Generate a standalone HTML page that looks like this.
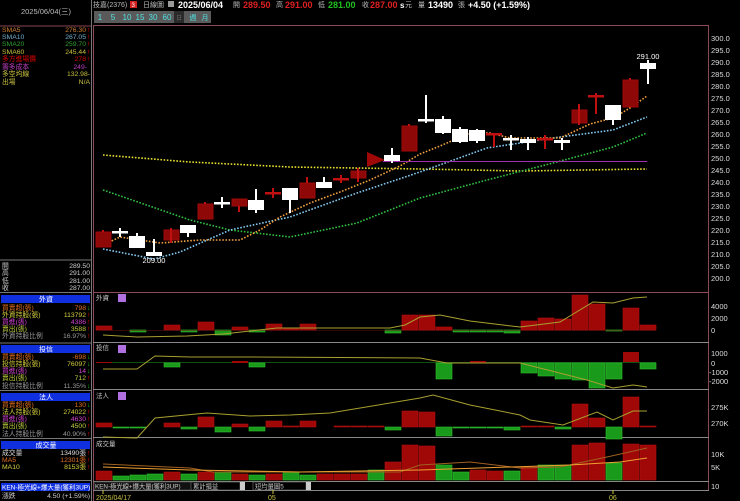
<!DOCTYPE html>
<html><head><meta charset="utf-8"><style>
html,body{margin:0;padding:0;background:#000;width:740px;height:501px;overflow:hidden}
svg{display:block}
text{font-family:"Liberation Sans","Noto Sans CJK TC",sans-serif}
</style></head><body>
<svg width="740" height="501" viewBox="0 0 740 501" xmlns="http://www.w3.org/2000/svg">
<rect width="740" height="501" fill="#000"/>
<line x1="91.5" y1="0" x2="91.5" y2="501" stroke="#777" stroke-width="1"/>
<text x="46" y="14" fill="#bbb" font-size="7.5" text-anchor="middle">2025/06/04(三)</text>
<line x1="0" y1="26" x2="91" y2="26" stroke="#884455"/>
<g font-size="6.8">
<text x="2" y="32" fill="#d08030">SMA5</text><text x="86" y="32" fill="#d08030" text-anchor="end">276.30</text><text x="87" y="32" fill="#e00">↑</text>
<text x="2" y="39" fill="#70b0d0">SMA10</text><text x="86" y="39" fill="#70b0d0" text-anchor="end">267.05</text><text x="87" y="39" fill="#e00">↑</text>
<text x="2" y="46" fill="#30a030">SMA20</text><text x="86" y="46" fill="#30a030" text-anchor="end">259.70</text><text x="87" y="46" fill="#e00">↑</text>
<text x="2" y="54" fill="#c8c040">SMA60</text><text x="86" y="54" fill="#c8c040" text-anchor="end">245.44</text><text x="87" y="54" fill="#e00">↑</text>
<text x="2" y="61" fill="#d00">多方進場價</text><text x="86" y="61" fill="#d00" text-anchor="end">278</text><text x="87" y="61" fill="#e00">↑</text>
<text x="2" y="69" fill="#c040c0">籌多成本</text><text x="87" y="69" fill="#c040c0" text-anchor="end">249-</text>
<text x="2" y="76" fill="#c8c040">多空均線</text><text x="90" y="76" fill="#c8c040" text-anchor="end">132.98-</text>
<text x="2" y="84" fill="#c8c040">出場</text><text x="90" y="84" fill="#c8c040" text-anchor="end">N/A</text>
</g>
<line x1="0" y1="260" x2="91" y2="260" stroke="#777"/>
<g font-size="6.8" fill="#ccc">
<text x="2" y="268">開</text><text x="90" y="268" text-anchor="end">289.50</text>
<text x="2" y="275">高</text><text x="90" y="275" text-anchor="end">291.00</text>
<text x="2" y="283">低</text><text x="90" y="283" text-anchor="end">281.00</text>
<text x="2" y="290">收</text><text x="90" y="290" text-anchor="end">287.00</text>
</g>
<line x1="0" y1="292.5" x2="91" y2="292.5" stroke="#777"/>
<rect x="1" y="295" width="89" height="8" fill="#1030e0"/><text x="46" y="301.5" fill="#fff" font-size="7" text-anchor="middle">外資</text>
<g font-size="6.8">
<text x="2" y="310" fill="#e07020">買賣超(張)</text><text x="86" y="310" fill="#e07020" text-anchor="end">798</text><text x="87" y="310" fill="#0c0">↓</text>
<text x="2" y="317" fill="#d8d040">外資持股(張)</text><text x="86" y="317" fill="#d8d040" text-anchor="end">113792</text><text x="87" y="317" fill="#e00">↑</text>
<text x="2" y="324" fill="#d040d0">買進(張)</text><text x="86" y="324" fill="#d040d0" text-anchor="end">4386</text><text x="87" y="324" fill="#e00">↑</text>
<text x="2" y="331" fill="#c0d040">賣出(張)</text><text x="86" y="331" fill="#c0d040" text-anchor="end">3588</text><text x="87" y="331" fill="#e00">↑</text>
<text x="2" y="338" fill="#999">外資持股比例</text><text x="86" y="338" fill="#999" text-anchor="end">16.97%</text><text x="87" y="338" fill="#e00">↑</text>
</g>
<line x1="0" y1="343" x2="91" y2="343" stroke="#777"/>
<rect x="1" y="345" width="89" height="8" fill="#1030e0"/><text x="46" y="351.5" fill="#fff" font-size="7" text-anchor="middle">投信</text>
<g font-size="6.8">
<text x="2" y="359" fill="#e07020">買賣超(張)</text><text x="86" y="359" fill="#e07020" text-anchor="end">-698</text><text x="87" y="359" fill="#0c0">↓</text>
<text x="2" y="366" fill="#d8d040">投信持股(張)</text><text x="86" y="366" fill="#d8d040" text-anchor="end">76097</text><text x="87" y="366" fill="#0c0">↓</text>
<text x="2" y="373" fill="#d040d0">買進(張)</text><text x="86" y="373" fill="#d040d0" text-anchor="end">14</text><text x="87" y="373" fill="#0c0">↓</text>
<text x="2" y="380" fill="#c0d040">賣出(張)</text><text x="86" y="380" fill="#c0d040" text-anchor="end">712</text><text x="87" y="380" fill="#e00">↑</text>
<text x="2" y="388" fill="#999">投信持股比例</text><text x="86" y="388" fill="#999" text-anchor="end">11.35%</text><text x="87" y="388" fill="#0c0">↓</text>
</g>
<line x1="0" y1="390.5" x2="91" y2="390.5" stroke="#777"/>
<rect x="1" y="393" width="89" height="8" fill="#1030e0"/><text x="46" y="399.5" fill="#fff" font-size="7" text-anchor="middle">法人</text>
<g font-size="6.8">
<text x="2" y="407" fill="#e07020">買賣超(張)</text><text x="86" y="407" fill="#e07020" text-anchor="end">130</text><text x="87" y="407" fill="#0c0">↓</text>
<text x="2" y="414" fill="#d8d040">法人持股(張)</text><text x="86" y="414" fill="#d8d040" text-anchor="end">274022</text><text x="87" y="414" fill="#e00">↑</text>
<text x="2" y="421" fill="#d040d0">買進(張)</text><text x="86" y="421" fill="#d040d0" text-anchor="end">4630</text><text x="87" y="421" fill="#e00">↑</text>
<text x="2" y="428" fill="#c0d040">賣出(張)</text><text x="86" y="428" fill="#c0d040" text-anchor="end">4500</text><text x="87" y="428" fill="#e00">↑</text>
<text x="2" y="436" fill="#999">法人持股比例</text><text x="86" y="436" fill="#999" text-anchor="end">40.90%</text><text x="87" y="436" fill="#e00">↑</text>
</g>
<line x1="0" y1="438.5" x2="91" y2="438.5" stroke="#777"/>
<rect x="1" y="441" width="89" height="8" fill="#1030e0"/><text x="46" y="447.5" fill="#fff" font-size="7" text-anchor="middle">成交量</text>
<g font-size="6.8">
<text x="2" y="455" fill="#ddd">成交量</text><text x="86" y="455" fill="#ddd" text-anchor="end">13490張</text><text x="87" y="455" fill="#e00">↑</text>
<text x="2" y="462" fill="#e07020">MA5</text><text x="86" y="462" fill="#e07020" text-anchor="end">12301張</text><text x="87" y="462" fill="#e00">↑</text>
<text x="2" y="469" fill="#d8d040">MA10</text><text x="86" y="469" fill="#d8d040" text-anchor="end">8153張</text><text x="87" y="469" fill="#e00">↑</text>
</g>
<line x1="0" y1="480.5" x2="91" y2="480.5" stroke="#777"/>
<rect x="1" y="483" width="89" height="8" fill="#1030e0"/><text x="2" y="489.5" fill="#fff" font-size="6.5">KEN-極光線+爆大量(獲利3UP)</text>
<text x="2" y="498" fill="#ccc" font-size="6.8">漲跌</text><text x="90" y="498" fill="#ccc" font-size="6.8" text-anchor="end">4.50 (+1.59%)</text>

<g font-size="7">
<text x="93" y="7" fill="#bbb">技嘉(2376)</text>
<rect x="130" y="1" width="7" height="7" fill="#d02020"/><text x="131.5" y="7" fill="#fff" font-size="6">3</text>
<text x="143" y="7" fill="#bbb">日線圖</text>
<rect x="168" y="1" width="6" height="6" fill="#999"/>
<text x="178" y="8" fill="#fff" font-size="9" font-weight="bold">2025/06/04</text>
<text x="233" y="7" fill="#bbb">開</text><text x="243" y="8" fill="#e02020" font-size="9" font-weight="bold">289.50</text>
<text x="276" y="7" fill="#bbb">高</text><text x="285" y="8" fill="#e02020" font-size="9" font-weight="bold">291.00</text>
<text x="318" y="7" fill="#bbb">低</text><text x="328" y="8" fill="#20c020" font-size="9" font-weight="bold">281.00</text>
<text x="362" y="7" fill="#bbb">收</text><text x="370" y="8" fill="#e02020" font-size="9" font-weight="bold">287.00</text>
<text x="400" y="8" fill="#fff" font-size="8" font-weight="bold">s</text><text x="405" y="7" fill="#bbb">元</text>
<text x="418" y="7" fill="#bbb">量</text><text x="428" y="8" fill="#fff" font-size="9" font-weight="bold">13490</text>
<text x="458" y="7" fill="#bbb">張</text><text x="468" y="8" fill="#fff" font-size="9" font-weight="bold">+4.50 (+1.59%)</text>
</g>
<g font-size="8">
<rect x="94" y="11" width="117" height="12" fill="#5a5a5a"/>
<rect x="174" y="11" width="10" height="12" fill="#2a2a2a"/>
<text x="100" y="20" fill="#50e0e0" text-anchor="middle">1</text>
<text x="113" y="20" fill="#50e0e0" text-anchor="middle">5</text>
<text x="127" y="20" fill="#50e0e0" text-anchor="middle">10</text>
<text x="140" y="20" fill="#50e0e0" text-anchor="middle">15</text>
<text x="153" y="20" fill="#50e0e0" text-anchor="middle">30</text>
<text x="167" y="20" fill="#50e0e0" text-anchor="middle">60</text>
<text x="179" y="20" fill="#666" font-size="6" text-anchor="middle">日</text>
<text x="193" y="20" fill="#50e0e0" font-size="7" text-anchor="middle">週</text>
<text x="205" y="20" fill="#50e0e0" font-size="7" text-anchor="middle">月</text>
</g>
<line x1="93" y1="25.5" x2="709" y2="25.5" stroke="#8a4a5a"/>
<line x1="93.5" y1="25" x2="93.5" y2="501" stroke="#8a4a5a"/>
<line x1="708.5" y1="25" x2="708.5" y2="490" stroke="#8a4a5a"/>
<line x1="93" y1="292.5" x2="709" y2="292.5" stroke="#8a4a5a"/>
<g stroke="#888">
<line x1="93" y1="342.5" x2="709" y2="342.5"/>
<line x1="93" y1="389.5" x2="709" y2="389.5"/>
<line x1="93" y1="437.5" x2="709" y2="437.5"/>
<line x1="93" y1="481.5" x2="709" y2="481.5"/>
<line x1="93" y1="490.5" x2="709" y2="490.5"/>
</g>
<g font-size="7.5" fill="#ddd">
<text x="711" y="41">300.0</text><text x="711" y="53">295.0</text><text x="711" y="65">290.0</text><text x="711" y="77">285.0</text><text x="711" y="89">280.0</text><text x="711" y="101">275.0</text><text x="711" y="113">270.0</text><text x="711" y="125">265.0</text><text x="711" y="137">260.0</text><text x="711" y="149">255.0</text><text x="711" y="161">250.0</text><text x="711" y="173">245.0</text><text x="711" y="185">240.0</text><text x="711" y="197">235.0</text><text x="711" y="209">230.0</text><text x="711" y="221">225.0</text><text x="711" y="233">220.0</text><text x="711" y="245">215.0</text><text x="711" y="257">210.0</text><text x="711" y="269">205.0</text><text x="711" y="281">200.0</text>
</g>
<g fill="none" stroke-width="1.6" stroke-dasharray="1.6 1.6">
<polyline stroke="#e8e030" points="103,155 190,162 290,167 420,169 520,171 647,169"/>
<polyline stroke="#30c040" points="103,190 190,220 230,230 290,237 357,223 420,198 487,180 553,163 613,147 647,133"/>
<polyline stroke="#80c8f0" points="103,249 154,259 180,252 230,230 290,217 357,193 420,172 487,148 553,138 613,130 647,117"/>
<polyline stroke="#f0a040" points="103,245 120,237 160,243 200,240 240,240 260,230 280,217 310,203 340,192 370,180 400,166 420,154 440,146 470,133 490,133 510,138 560,138 590,124 613,118 630,108 647,96"/>
</g>
<line x1="383" y1="161.5" x2="647" y2="161.5" stroke="#a030b0" stroke-width="1"/>
<g stroke-width="2">
<g fill="#8e0808" stroke="#a00a0a" stroke-width="1">
<rect x="96" y="232" width="15" height="15"/>
<rect x="164" y="230" width="15" height="10"/>
<rect x="198" y="204" width="15" height="15"/>
<rect x="232" y="199" width="15" height="7"/>
<rect x="300" y="183" width="15" height="15"/>
<rect x="351" y="171" width="15" height="7"/>
<rect x="402" y="126" width="15" height="25"/>
<rect x="572" y="110" width="15" height="13"/>
<rect x="623" y="80" width="15" height="27"/>
</g>
<g stroke="#c01010">
<line x1="103" y1="230" x2="103" y2="232"/><line x1="171" y1="228" x2="171" y2="243"/><line x1="205" y1="202" x2="205" y2="204"/><line x1="239" y1="206" x2="239" y2="212"/><line x1="307" y1="177" x2="307" y2="183"/><line x1="358" y1="168" x2="358" y2="182"/><line x1="409" y1="124" x2="409" y2="126"/><line x1="579" y1="104" x2="579" y2="125"/><line x1="630" y1="78" x2="630" y2="80"/>
<line x1="273" y1="188" x2="273" y2="198"/><line x1="494" y1="133" x2="494" y2="147"/><line x1="545" y1="135" x2="545" y2="149"/><line x1="596" y1="93" x2="596" y2="114"/><line x1="341" y1="175" x2="341" y2="183"/>
</g>
<g fill="#c01010">
<rect x="265" y="192" width="16" height="2.5"/><rect x="486" y="133" width="16" height="2.5"/><rect x="537" y="138" width="16" height="2.5"/><rect x="588" y="95" width="16" height="2.5"/><rect x="333" y="178" width="16" height="2.5"/>
</g>
<polygon points="367,152 367,167 385,160" fill="#a00808"/>
<g fill="#fff">
<rect x="129" y="236" width="16" height="12"/><rect x="146" y="252" width="16" height="4"/><rect x="180" y="225" width="16" height="8"/><rect x="248" y="200" width="16" height="10"/><rect x="282" y="188" width="16" height="12"/><rect x="316" y="182" width="16" height="6"/><rect x="384" y="155" width="16" height="6"/><rect x="435" y="119" width="16" height="14"/><rect x="452" y="129" width="16" height="13"/><rect x="469" y="130" width="16" height="11"/><rect x="520" y="139" width="16" height="4"/><rect x="554" y="140" width="16" height="3"/><rect x="605" y="105" width="16" height="15"/><rect x="640" y="63" width="16" height="6"/>
<rect x="112" y="231" width="16" height="2.5"/><rect x="214" y="202" width="16" height="2.5"/><rect x="418" y="119" width="16" height="2.5"/><rect x="503" y="138" width="16" height="2.5"/>
</g>
<g stroke="#fff">
<line x1="120" y1="228" x2="120" y2="237"/><line x1="137" y1="233" x2="137" y2="236"/><line x1="154" y1="239" x2="154" y2="256"/><line x1="188" y1="233" x2="188" y2="237"/><line x1="222" y1="197" x2="222" y2="208"/><line x1="256" y1="189" x2="256" y2="213"/><line x1="290" y1="200" x2="290" y2="213"/><line x1="324" y1="177" x2="324" y2="182"/><line x1="392" y1="148" x2="392" y2="163"/><line x1="426" y1="95" x2="426" y2="123"/><line x1="443" y1="116" x2="443" y2="134"/><line x1="460" y1="127" x2="460" y2="143"/><line x1="477" y1="129" x2="477" y2="143"/><line x1="511" y1="135" x2="511" y2="150"/><line x1="528" y1="137" x2="528" y2="150"/><line x1="562" y1="138" x2="562" y2="150"/><line x1="613" y1="120" x2="613" y2="125"/><line x1="648" y1="60" x2="648" y2="84"/>
</g>
</g>
<text x="648" y="59" fill="#fff" font-size="7.5" text-anchor="middle">291.00</text>
<text x="154" y="263" fill="#fff" font-size="7.5" text-anchor="middle">209.00</text>

<text x="96" y="300" fill="#ccc" font-size="6.5">外資</text><rect x="118" y="294" width="8" height="8" fill="#b070e0"/>
<g font-size="7.5" fill="#ddd"><text x="711" y="309">4000</text><text x="711" y="321">2000</text><text x="711" y="333">0</text></g>
<g fill="#a00808" stroke="#b01010" stroke-width="0.6">
<rect x="96" y="326" width="16" height="4"/><rect x="164" y="325" width="16" height="5"/><rect x="198" y="322" width="16" height="8"/><rect x="232" y="327" width="16" height="3"/><rect x="266" y="324" width="16" height="6"/><rect x="283" y="328" width="16" height="2"/><rect x="300" y="324" width="16" height="6"/><rect x="402" y="315" width="16" height="15"/><rect x="419" y="315" width="16" height="15"/><rect x="436" y="327" width="16" height="3"/><rect x="521" y="321" width="16" height="9"/><rect x="538" y="318" width="16" height="12"/><rect x="555" y="319" width="16" height="11"/><rect x="572" y="295" width="16" height="35"/><rect x="589" y="304" width="16" height="26"/><rect x="623" y="308" width="16" height="22"/><rect x="640" y="325" width="16" height="5"/>
</g>
<g fill="#1a9a1a" stroke="#30c030" stroke-width="0.6">
<rect x="130" y="330" width="16" height="2"/><rect x="181" y="330" width="16" height="2"/><rect x="215" y="330" width="16" height="5"/><rect x="249" y="330" width="16" height="2"/><rect x="385" y="330" width="16" height="3"/><rect x="453" y="330" width="16" height="2"/><rect x="470" y="330" width="16" height="2"/><rect x="487" y="330" width="16" height="2"/><rect x="504" y="330" width="16" height="3"/><rect x="606" y="330" width="16" height="1"/>
</g>
<line x1="96" y1="330.5" x2="656" y2="330.5" stroke="#6a1010" stroke-width="0.6"/>
<polyline fill="none" stroke="#a8a030" stroke-width="1" points="103,335 137,337 187,336 223,334 277,328 323,328 390,328 405,325 420,317 440,315 470,321 503,325 520,327 560,322 593,302 613,303 633,298 647,297"/>

<text x="96" y="350" fill="#ccc" font-size="6.5">投信</text><rect x="118" y="345" width="8" height="8" fill="#b070e0"/>
<g font-size="7.5" fill="#ddd"><text x="711" y="356">1000</text><text x="711" y="366">0</text><text x="709" y="375">-1000</text><text x="709" y="384">-2000</text></g>
<line x1="96" y1="362.5" x2="656" y2="362.5" stroke="#105010" stroke-width="1"/>
<g fill="#a00808"><rect x="96" y="362" width="16" height="1"/><rect x="232" y="361" width="16" height="2"/><rect x="470" y="361" width="16" height="2"/><rect x="623" y="352" width="16" height="10"/></g>
<g fill="#1a9a1a" stroke="#30c030" stroke-width="0.6">
<rect x="164" y="363" width="16" height="4"/><rect x="249" y="363" width="16" height="4"/><rect x="436" y="363" width="16" height="16"/><rect x="521" y="363" width="16" height="10"/><rect x="538" y="363" width="16" height="13"/><rect x="555" y="363" width="16" height="16"/><rect x="572" y="363" width="16" height="17"/><rect x="589" y="363" width="16" height="25"/><rect x="606" y="363" width="16" height="16"/><rect x="640" y="363" width="16" height="6"/>
</g>
<polyline fill="none" stroke="#a8a030" stroke-width="1" points="103,369 137,369 155,356 190,357 250,357 420,358 447,363 520,363 587,380 613,388 633,385 647,387"/>

<text x="96" y="398" fill="#ccc" font-size="6.5">法人</text><rect x="118" y="392" width="8" height="8" fill="#b070e0"/>
<g font-size="7.5" fill="#ddd"><text x="711" y="410">275K</text><text x="711" y="426">270K</text></g>
<g fill="#a00808" stroke="#b01010" stroke-width="0.6">
<rect x="96" y="423" width="16" height="4"/><rect x="164" y="423" width="16" height="4"/><rect x="198" y="417" width="16" height="10"/><rect x="232" y="424" width="16" height="3"/><rect x="266" y="421" width="16" height="6"/><rect x="300" y="421" width="16" height="6"/><rect x="283" y="426" width="16" height="1"/><rect x="334" y="426" width="16" height="1"/><rect x="351" y="426" width="16" height="1"/><rect x="368" y="426" width="16" height="1"/><rect x="402" y="411" width="16" height="16"/><rect x="419" y="412" width="16" height="15"/><rect x="521" y="426" width="16" height="1"/><rect x="538" y="426" width="16" height="1"/><rect x="572" y="404" width="16" height="23"/><rect x="589" y="418" width="16" height="9"/><rect x="623" y="397" width="16" height="30"/><rect x="640" y="426" width="16" height="1"/>
</g>
<g fill="#1a9a1a" stroke="#30c030" stroke-width="0.6">
<rect x="113" y="427" width="16" height="1"/><rect x="130" y="427" width="16" height="1"/><rect x="181" y="427" width="16" height="2"/><rect x="215" y="427" width="16" height="5"/><rect x="249" y="427" width="16" height="4"/><rect x="385" y="427" width="16" height="3"/><rect x="436" y="427" width="16" height="9"/><rect x="453" y="427" width="16" height="1"/><rect x="470" y="427" width="16" height="1"/><rect x="487" y="427" width="16" height="1"/><rect x="504" y="427" width="16" height="3"/><rect x="555" y="427" width="16" height="2"/><rect x="606" y="427" width="16" height="12"/>
</g>
<polyline fill="none" stroke="#a8a030" stroke-width="1" points="103,437 137,438 155,418 207,413 250,416 290,415 330,413 420,398 433,395 470,405 520,415 530,420 563,425 597,412 613,420 633,411 647,411"/>

<text x="96" y="446" fill="#ccc" font-size="6.5">成交量</text>
<g font-size="7.5" fill="#ddd"><text x="711" y="457">10K</text><text x="711" y="470">5K</text><text x="711" y="489">10</text></g>
<g fill="#a00808" stroke="#b01010" stroke-width="0.6">
<rect x="96" y="471" width="16" height="9"/><rect x="164" y="472" width="16" height="8"/><rect x="198" y="472" width="16" height="8"/><rect x="232" y="474" width="16" height="6"/><rect x="266" y="474" width="16" height="6"/><rect x="317" y="474" width="16" height="6"/><rect x="334" y="474" width="16" height="6"/><rect x="351" y="474" width="16" height="6"/><rect x="385" y="462" width="16" height="18"/><rect x="402" y="445" width="16" height="35"/><rect x="419" y="446" width="16" height="34"/><rect x="470" y="470" width="16" height="10"/><rect x="487" y="471" width="16" height="9"/><rect x="521" y="467" width="16" height="13"/><rect x="572" y="445" width="16" height="35"/><rect x="589" y="443" width="16" height="37"/><rect x="623" y="444" width="16" height="36"/><rect x="640" y="445" width="16" height="35"/>
</g>
<g fill="#1a9a1a" stroke="#30c030" stroke-width="0.6">
<rect x="113" y="476" width="16" height="4"/><rect x="130" y="475" width="16" height="5"/><rect x="147" y="474" width="16" height="6"/><rect x="181" y="474" width="16" height="6"/><rect x="215" y="472" width="16" height="8"/><rect x="249" y="475" width="16" height="5"/><rect x="283" y="472" width="16" height="8"/><rect x="300" y="475" width="16" height="5"/><rect x="368" y="470" width="16" height="10"/><rect x="436" y="465" width="16" height="15"/><rect x="453" y="472" width="16" height="8"/><rect x="504" y="471" width="16" height="9"/><rect x="538" y="465" width="16" height="15"/><rect x="555" y="465" width="16" height="15"/><rect x="606" y="463" width="16" height="17"/>
</g>
<polyline fill="none" stroke="#a06020" stroke-width="1" points="103,464 190,468 213,472 400,472 420,465 470,462 520,468 560,467 607,457 647,448"/>
<polyline fill="none" stroke="#f0a030" stroke-width="1" points="103,467 190,470 300,472 420,470 570,465 620,462 647,458"/>

<rect x="94" y="482" width="100" height="8" fill="#111" stroke="#555" stroke-width="0.6"/>
<text x="95" y="488.5" fill="#ccc" font-size="6.3">KEN-極光線+爆大量(獲利3UP)</text>
<rect x="191" y="482" width="49" height="8" fill="#000" stroke="#777" stroke-width="0.6"/><text x="193" y="488.5" fill="#ccc" font-size="6.3">累計損益</text><rect x="240" y="482" width="5" height="8" fill="#ccc"/>
<rect x="253" y="482" width="53" height="8" fill="#000" stroke="#777" stroke-width="0.6"/><text x="255" y="488.5" fill="#ccc" font-size="6.3">短均量圖5</text><rect x="306" y="482" width="5" height="8" fill="#ccc"/>
<g stroke="#c8c040"><line x1="103" y1="490" x2="103" y2="494"/><line x1="273" y1="490" x2="273" y2="494"/><line x1="613" y1="490" x2="613" y2="494"/></g>
<g font-size="7" fill="#c8c040"><text x="96" y="500">2025/04/17</text><text x="268" y="500">05</text><text x="609" y="500">06</text></g>
</svg>
</body></html>
